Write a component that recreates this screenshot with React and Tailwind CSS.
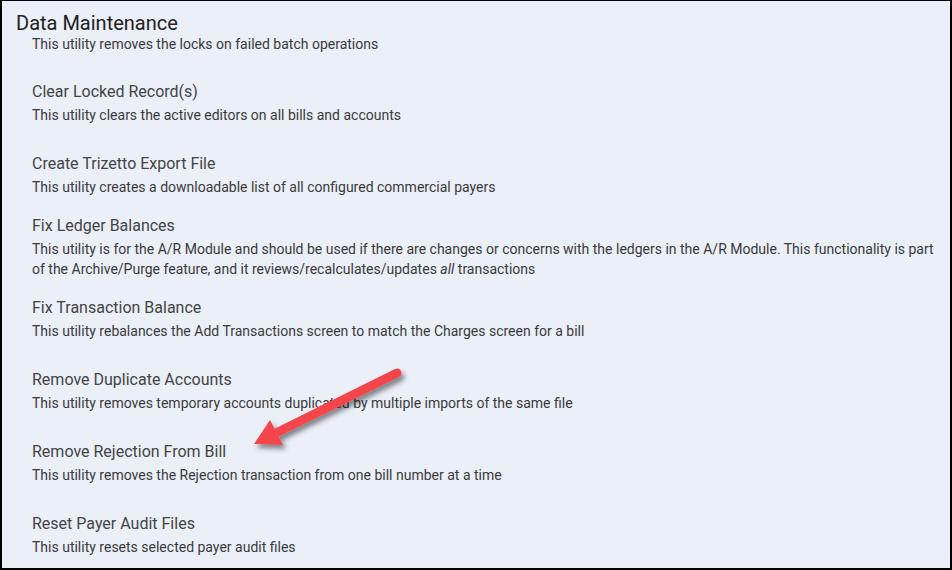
import React from "react";

const rows = [
  { t: "Clear Locked Record(s)", d: <>This utility clears the active editors on all bills and accounts</> },
  { t: "Create Trizetto Export File", d: <>This utility creates a downloadable list of all configured commercial payers</> },
  {
    t: "Fix Ledger Balances",
    d: (
      <>
        This utility is for the A/R Module and should be used if there are changes or concerns with the ledgers in the A/R Module. This functionality is part of the Archive/Purge feature, and it reviews/recalculates/updates <i>all</i> transactions
      </>
    ),
  },
  { t: "Fix Transaction Balance", d: <>This utility rebalances the Add Transactions screen to match the Charges screen for a bill</> },
  { t: "Remove Duplicate Accounts", d: <>This utility removes temporary accounts duplicated by multiple imports of the same file</> },
  { t: "Remove Rejection From Bill", d: <>This utility removes the Rejection transaction from one bill number at a time</> },
  { t: "Reset Payer Audit Files", d: <>This utility resets selected payer audit files</> },
];

export default function App() {
  return (
    <div
      className="relative w-[952px] h-[570px] overflow-hidden bg-[#ebeff8] border-black border-l-2 border-r-2 border-b-2 border-t"
      style={{ fontFamily: "Roboto, 'Noto Sans', sans-serif" }}
    >
      <div className="h-[66px] pt-[10px] pl-[14px]">
        <h1 className="text-[20px] leading-6 text-[#222]">Data Maintenance</h1>
        <p className="-mt-[1px] pl-4 text-[14px] leading-5 text-[#3a3a3a]">This utility removes the locks on failed batch operations</p>
      </div>
      {rows.map((r) => (
        <div key={r.t} className="h-[72px] flex flex-col justify-center pl-[30px] pr-[8px]">
          <div className="text-[16px] leading-5 text-[#444]">{r.t}</div>
          <div className="mt-[3px] text-[14px] leading-5 text-[#3a3a3a]">{r.d}</div>
        </div>
      ))}
      <svg className="absolute left-0 top-0 pointer-events-none" width="952" height="570" viewBox="0 0 952 570">
        <defs>
          <filter id="sh" x="-20%" y="-20%" width="140%" height="140%">
            <feDropShadow dx="3" dy="4" stdDeviation="2.5" floodColor="#000" floodOpacity="0.45" />
          </filter>
        </defs>
        <g filter="url(#sh)">
          <line x1="395" y1="372" x2="272" y2="433" stroke="#f4454c" strokeWidth="9" strokeLinecap="round" />
          <polygon points="252,443 268,419 281,444" fill="#f4454c" />
        </g>
      </svg>
    </div>
  );
}
